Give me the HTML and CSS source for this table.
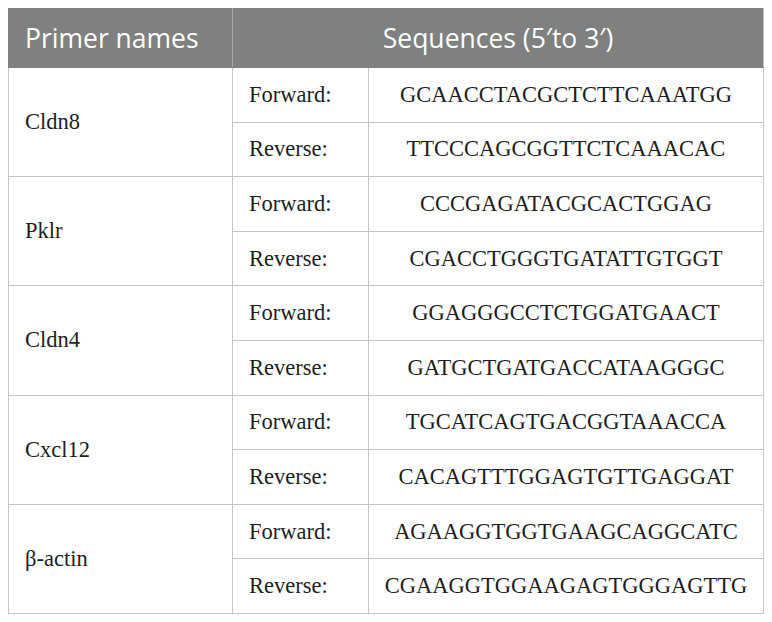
FILE: index.html
```html
<!DOCTYPE html>
<html>
<head>
<meta charset="utf-8">
<link rel="stylesheet" href="styles.css">
</head>
<body>
<table class="primers">
  <colgroup>
    <col class="c-name">
    <col class="c-dir">
    <col class="c-seq">
  </colgroup>
  <thead>
    <tr>
      <th class="h-name">Primer names</th>
      <th class="h-seq" colspan="2">Sequences (5′to 3′)</th>
    </tr>
  </thead>
  <tbody>
    <tr><td class="name" rowspan="2">Cldn8</td><td class="dir">Forward:</td><td class="seq">GCAACCTACGCTCTTCAAATGG</td></tr>
    <tr><td class="dir">Reverse:</td><td class="seq">TTCCCAGCGGTTCTCAAACAC</td></tr>
    <tr><td class="name" rowspan="2">Pklr</td><td class="dir">Forward:</td><td class="seq">CCCGAGATACGCACTGGAG</td></tr>
    <tr><td class="dir">Reverse:</td><td class="seq">CGACCTGGGTGATATTGTGGT</td></tr>
    <tr><td class="name" rowspan="2">Cldn4</td><td class="dir">Forward:</td><td class="seq">GGAGGGCCTCTGGATGAACT</td></tr>
    <tr><td class="dir">Reverse:</td><td class="seq">GATGCTGATGACCATAAGGGC</td></tr>
    <tr><td class="name" rowspan="2">Cxcl12</td><td class="dir">Forward:</td><td class="seq">TGCATCAGTGACGGTAAACCA</td></tr>
    <tr><td class="dir">Reverse:</td><td class="seq">CACAGTTTGGAGTGTTGAGGAT</td></tr>
    <tr><td class="name" rowspan="2">β-actin</td><td class="dir">Forward:</td><td class="seq">AGAAGGTGGTGAAGCAGGCATC</td></tr>
    <tr><td class="dir">Reverse:</td><td class="seq">CGAAGGTGGAAGAGTGGGAGTTG</td></tr>
  </tbody>
</table>
</body>
</html>
```

FILE: styles.css
```css
html, body {
  margin: 0;
  padding: 0;
  background: #ffffff;
}

body {
  padding: 8px 0 0 8px;
}

.primers {
  border-collapse: collapse;
  table-layout: fixed;
  width: 755px;
  border: 1px solid #c6c6c6;
}

.c-name { width: 224px; }
.c-dir { width: 136px; }
.c-seq { width: 395px; }

.primers th {
  background: #7f8080;
  color: #ffffff;
  font-family: "Open Sans", "Liberation Sans", sans-serif;
  font-weight: 400;
  font-size: 26.5px;
  height: 58px;
  padding: 0;
  border: 1px solid #7f8080;
  border-right-color: #a8a8a8;
}

.primers th.h-seq {
  border-right-color: #c6c6c6;
}

.h-name {
  text-align: left;
  padding-left: 16px !important;
}

.h-seq {
  text-align: center;
}

.primers td {
  font-family: "Liberation Serif", "Times New Roman", serif;
  font-size: 22.5px;
  color: #1e1e1e;
  height: 53.6px;
  padding: 0;
  border: 1px solid #c6c6c6;
}

.name {
  padding-left: 16px !important;
  text-align: left;
}

.dir {
  padding-left: 16px !important;
  text-align: left;
}

.seq {
  text-align: center;
}
```
